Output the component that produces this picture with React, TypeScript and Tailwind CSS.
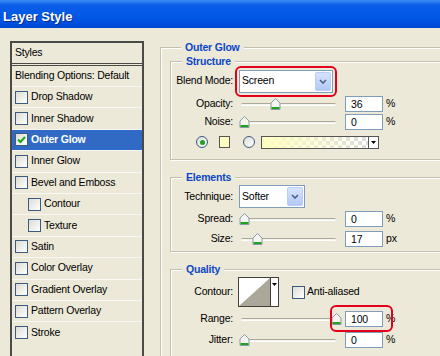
import React from "react";

const styleRows = [
  { label: "Drop Shadow" },
  { label: "Inner Shadow" },
  { label: "Outer Glow", checked: true, selected: true },
  { label: "Inner Glow" },
  { label: "Bevel and Emboss" },
  { label: "Contour", indent: true },
  { label: "Texture", indent: true },
  { label: "Satin" },
  { label: "Color Overlay" },
  { label: "Gradient Overlay" },
  { label: "Pattern Overlay" },
  { label: "Stroke" },
];

function Checkbox({ checked }: { checked?: boolean }) {
  return (
    <span className="flex size-[13px] shrink-0 items-center justify-center border border-[#3d5a80] bg-[linear-gradient(135deg,#dcdcd5,#ffffff)]">
      {checked && (
        <svg width="9" height="9" viewBox="0 0 9 9">
          <path d="M1 4.5 L3.5 7 L8 2" fill="none" stroke="#21a121" strokeWidth="2" />
        </svg>
      )}
    </span>
  );
}

function Thumb() {
  return (
    <svg width="11" height="12" viewBox="0 0 11 12">
      <path d="M5.5 0.5 L10 5 V11.5 H1 V5 Z" fill="#f4f4f0" stroke="#8a9aa6" />
      <path d="M1.5 10 H9.5" stroke="#21a121" strokeWidth="2" />
    </svg>
  );
}

function Slider({ at }: { at: number }) {
  return (
    <div className="relative h-[14px] w-[97px] shrink-0">
      <div className="absolute left-[2px] right-0 top-[6px] h-[3px] rounded-full border-t border-b border-t-[#aca899] border-b-white bg-[#f4f3ec]" />
      <div className="absolute top-[1px]" style={{ left: at }}>
        <Thumb />
      </div>
    </div>
  );
}

function Num({ v, unit }: { v: string; unit: string }) {
  return (
    <div className="ml-[9px] flex items-center">
      <div className="h-[16px] w-[38px] border border-[#7f9db9] bg-white pl-[5px] leading-[14px]">{v}</div>
      <span className="ml-[3px]">{unit}</span>
    </div>
  );
}

function Label({ children }: { children: React.ReactNode }) {
  return <span className="w-[62px] shrink-0 text-right">{children}</span>;
}

function Combo({ value, className }: { value: string; className: string }) {
  return (
    <div className={`flex h-[23px] items-center border border-[#7f9db9] bg-white pl-[2px] ${className}`}>
      <span className="flex-1">{value}</span>
      <span className="mr-[1px] flex h-[19px] w-[16px] items-center justify-center rounded-[2px] border border-[#b9cdf6] bg-[linear-gradient(#d6e3fd,#b2c9f7)]">
        <svg width="8" height="5" viewBox="0 0 8 5">
          <path d="M1 1 L4 4 L7 1" stroke="#4d6185" strokeWidth="1.6" fill="none" />
        </svg>
      </span>
    </div>
  );
}

function Radio({ on }: { on?: boolean }) {
  return (
    <span className="flex size-[12px] shrink-0 items-center justify-center rounded-full border border-[#3d5a80] bg-[linear-gradient(135deg,#dcdcd5,#ffffff)]">
      {on && <span className="size-[5px] rounded-full bg-[#21a121]" />}
    </span>
  );
}

const group = "border border-[#c3c0ae] shadow-[inset_1px_1px_0_#fff,1px_1px_0_#fff]";
const legend = "ml-[2px] bg-[#ece9d8] px-[4px] font-bold leading-[12px] text-[#0c47c8]";

export default function App() {
  return (
    <div className="h-[356px] w-[440px] overflow-hidden bg-[#ece9d8] font-['Liberation_Sans',Arial,sans-serif] text-[10.5px] tracking-[-0.2px] text-black">
      <div className="flex h-[28px] items-center bg-[linear-gradient(#3b8cf6,#0a5fe8_18%,#0055e5_70%,#0047d2)] pl-[3px] pt-[5px] text-[13px] font-bold tracking-normal text-white [text-shadow:1px_1px_0_#0a2a80]">
        Layer Style
      </div>

      <div className="flex pt-[13px]">
        {/* styles list */}
        <div className="ml-[10px] h-[330px] w-[134px] shrink-0 border-2 border-[#4a4a46]">
          <div className="flex h-[23px] items-center border-b-[3px] border-double border-[#4a4a46] pl-[3px]">Styles</div>
          <div className="flex h-[20px] items-center pl-[3px]">Blending Options: Default</div>
          {styleRows.map((r) => (
            <div
              key={r.label}
              className={`flex h-[21.4px] items-center gap-[3px] border-t border-[#f9f8f2] ${r.indent ? "pl-[16px]" : "pl-[3px]"} ${r.selected ? "bg-[#316ac5] font-bold text-white" : ""}`}
            >
              <Checkbox checked={r.checked} />
              <span>{r.label}</span>
            </div>
          ))}
        </div>

        {/* settings */}
        <fieldset className={`ml-[16px] w-[320px] shrink-0 pl-[9px] ${group}`}>
          <legend className={`ml-[11px] ${legend}`}>Outer Glow</legend>

          <fieldset className={`mt-[2px] w-[300px] pb-[6px] ${group}`}>
            <legend className={`ml-[11px] ${legend}`}>Structure</legend>
            <div className="flex h-[28px] items-center">
              <Label>Blend Mode:</Label>
              <div className="relative ml-[6px]">
                <Combo value="Screen" className="w-[94px]" />
                <div className="absolute -inset-[4px] rounded-[6px] border-2 border-[#e3001b]" />
              </div>
            </div>
            <div className="flex h-[18px] items-center">
              <Label>Opacity:</Label>
              <div className="ml-[6px] flex items-center">
                <Slider at={31} />
                <Num v="36" unit="%" />
              </div>
            </div>
            <div className="flex h-[18px] items-center">
              <Label>Noise:</Label>
              <div className="ml-[6px] flex items-center">
                <Slider at={0} />
                <Num v="0" unit="%" />
              </div>
            </div>
            <div className="flex h-[22px] items-center pl-[25px]">
              <Radio on />
              <span className="ml-[11px] h-[12px] w-[11px] border border-[#555] bg-[#ffffc0]" />
              <span className="ml-[13px]">
                <Radio />
              </span>
              <div className="ml-[6px] flex h-[13px] w-[118px] border border-[#555]">
                <div className="flex-1 bg-[image:linear-gradient(to_right,#ffffc0,rgba(255,255,192,0)),conic-gradient(#dcdcdc_25%,#fff_0_50%,#dcdcdc_0_75%,#fff_0)] bg-[length:100%_100%,8px_8px]" />
                <div className="flex w-[10px] items-center justify-center border-l border-[#555] bg-white">
                  <svg width="5" height="3" viewBox="0 0 5 3">
                    <path d="M0 0 H5 L2.5 3 Z" fill="#000" />
                  </svg>
                </div>
              </div>
            </div>
          </fieldset>

          <fieldset className={`mt-[11px] w-[300px] pb-[2px] ${group}`}>
            <legend className={`ml-[11px] ${legend}`}>Elements</legend>
            <div className="mt-[1px] flex h-[25px] items-center">
              <Label>Technique:</Label>
              <div className="ml-[6px]">
                <Combo value="Softer" className="w-[66px]" />
              </div>
            </div>
            <div className="flex h-[19px] items-center">
              <Label>Spread:</Label>
              <div className="ml-[6px] flex items-center">
                <Slider at={0} />
                <Num v="0" unit="%" />
              </div>
            </div>
            <div className="flex h-[21px] items-center">
              <Label>Size:</Label>
              <div className="ml-[6px] flex items-center">
                <Slider at={13} />
                <Num v="17" unit="px" />
              </div>
            </div>
          </fieldset>

          <fieldset className={`mt-[11px] w-[300px] pb-[10px] ${group}`}>
            <legend className={`ml-[11px] ${legend}`}>Quality</legend>
            <div className="flex h-[34px] items-center">
              <Label>Contour:</Label>
              <div className="ml-[5px] flex h-[30px] w-[41px] border border-[#404040] bg-white">
                <svg width="31" height="28" viewBox="0 0 31 28" className="shrink-0">
                  <path d="M0 28 L31 0 V28 Z" fill="#aca899" />
                </svg>
                <div className="flex flex-1 justify-center border-l border-[#404040] pt-[5px]">
                  <svg width="5" height="3" viewBox="0 0 5 3">
                    <path d="M0 0 H5 L2.5 3 Z" fill="#000" />
                  </svg>
                </div>
              </div>
              <span className="ml-[13px]">
                <Checkbox />
              </span>
              <span className="ml-[2px]">Anti-aliased</span>
            </div>
            <div className="relative flex h-[20px] items-center">
              <Label>Range:</Label>
              <div className="ml-[6px] flex items-center">
                <Slider at={92} />
                <Num v="100" unit="%" />
              </div>
              <div className="absolute left-[159px] top-[-4px] h-[27px] w-[63px] rounded-[6px] border-2 border-[#e3001b]" />
            </div>
            <div className="flex h-[22px] items-center">
              <Label>Jitter:</Label>
              <div className="ml-[6px] flex items-center">
                <Slider at={0} />
                <Num v="0" unit="%" />
              </div>
            </div>
          </fieldset>
        </fieldset>
      </div>
    </div>
  );
}
